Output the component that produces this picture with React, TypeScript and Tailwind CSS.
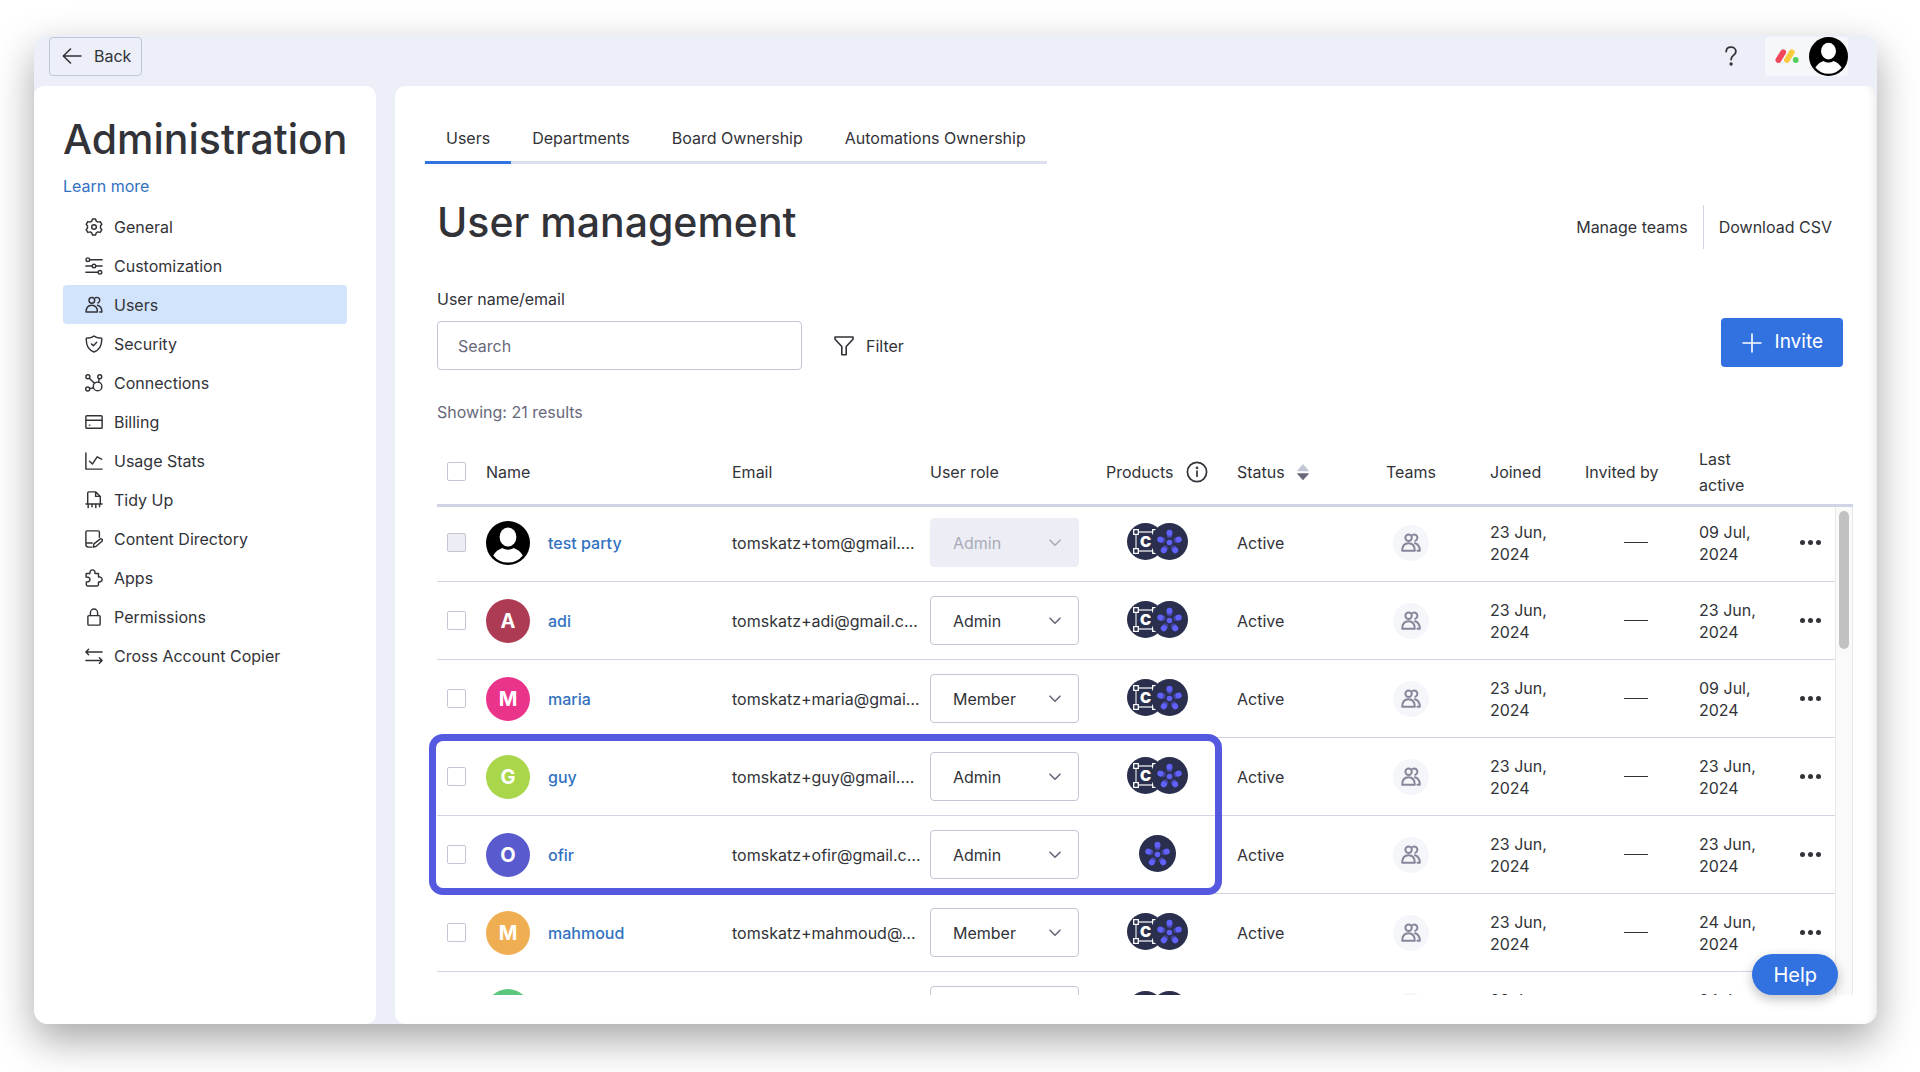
import type { ReactNode } from "react";

type User = {
  name: string;
  email: string;
  role: "Admin" | "Member";
  color?: string;
  copier: boolean;
  last: string;
  disabled?: boolean;
};

const users: User[] = [
  { name: "test party", email: "tomskatz+tom@gmail.…", role: "Admin", copier: true, last: "09 Jul,", disabled: true },
  { name: "adi", email: "tomskatz+adi@gmail.c…", role: "Admin", color: "bg-[#ae3b54]", copier: true, last: "23 Jun," },
  { name: "maria", email: "tomskatz+maria@gmai…", role: "Member", color: "bg-[#ea338b]", copier: true, last: "09 Jul," },
  { name: "guy", email: "tomskatz+guy@gmail.…", role: "Admin", color: "bg-[#a9d64b]", copier: true, last: "23 Jun," },
  { name: "ofir", email: "tomskatz+ofir@gmail.c…", role: "Admin", color: "bg-[#5a5acf]", copier: false, last: "23 Jun," },
  { name: "mahmoud", email: "tomskatz+mahmoud@…", role: "Member", color: "bg-[#f0ae53]", copier: true, last: "24 Jun," },
  { name: "noa", email: "tomskatz+noa@gmail.c…", role: "Member", color: "bg-[#5bc77c]", copier: true, last: "24 Jun," },
];

function Icon({ children, className = "size-5" }: { children: ReactNode; className?: string }) {
  return (
    <svg
      viewBox="0 0 20 20"
      className={`shrink-0 ${className}`}
      fill="none"
      stroke="currentColor"
      strokeWidth="1.6"
      strokeLinecap="round"
      strokeLinejoin="round"
      aria-hidden="true"
    >
      {children}
    </svg>
  );
}

const peoplePaths = (
  <>
    <circle cx="7.6" cy="4.8" r="3.2" />
    <path d="M1.2 17.8c0-5 2.6-7.6 6.3-7.6s6.3 2.6 6.3 7.6z" />
    <path d="M11.6 1.9c2.7-1.1 4.8.7 4.8 2.9 0 1.4-.9 2.5-2.1 3" />
    <path d="M13.9 10.3c3.2.9 4.9 3.5 4.9 7.5h-2.4" />
  </>
);

const nav: { label: string; icon: ReactNode }[] = [
  {
    label: "General",
    icon: (
      <>
        <circle cx="10" cy="10" r="2.6" />
        <path d="M8.3 1.1h3.4l.8 2.500 1.700 1 2.700-.600 1.800 3-1.500 1.900v2.200l1.500 1.900-1.800 3-2.700-.600-1.700 1-.8 2.500H8.300l-.8-2.500-1.700-1-2.700.600-1.800-3 1.500-1.900V8.900L1.300 7l1.800-3 2.700.600 1.700-1z" />
      </>
    ),
  },
  {
    label: "Customization",
    icon: (
      <>
        <circle cx="3.2" cy="3" r="2" />
        <path d="M5.200 3H19M1 10h7M12 10h7M1 17h13.500" />
        <circle cx="10" cy="10" r="2" />
        <circle cx="16.600" cy="17" r="2" />
      </>
    ),
  },
  { label: "Users", icon: peoplePaths },
  {
    label: "Security",
    icon: (
      <>
        <path d="M10 1.100c2 1.700 4.800 2.400 8.500 2.400.6 7.500-1.800 12.700-8.500 15.400C3.300 16.200.9 11 1.500 3.500 5.200 3.500 8 2.800 10 1.100z" />
        <path d="M7.200 10l2.100 2 3.700-3.900" />
      </>
    ),
  },
  {
    label: "Connections",
    icon: (
      <>
        <circle cx="3.200" cy="3" r="2.200" />
        <circle cx="16.400" cy="3" r="2.200" />
        <circle cx="3" cy="16.600" r="2.200" />
        <circle cx="14" cy="13.800" r="4.800" />
        <path d="M4.800 4.600l5.700 5.700M15.900 5.200L15 9M5.200 16.200l4.200-1" />
      </>
    ),
  },
  {
    label: "Billing",
    icon: (
      <>
        <rect x="1" y="3" width="18" height="14" rx="1" />
        <path d="M1 8h18M4.800 13.500h.6" />
      </>
    ),
  },
  {
    label: "Usage Stats",
    icon: <path d="M1 1v18h18M5 10.200l3.200 3.200 5.300-8L18.500 8" />,
  },
  {
    label: "Tidy Up",
    icon: (
      <>
        <path d="M3 14V2.200C3 1.500 3.500 1 4.200 1H12l5 5v8M11.800 1v5H17M1 14.500h18" />
        <path d="M3.500 15v3.500M7.800 15v2.500M12 15v3.500M16.200 15v2.500" />
      </>
    ),
  },
  {
    label: "Content Directory",
    icon: (
      <>
        <path d="M7.500 19H3.800A2.800 2.800 0 011 16.200V2.400C1 1.600 1.600 1 2.400 1h12.200c.8 0 1.400.6 1.400 1.400V8M1.200 14.500H8" />
        <path d="M9.200 18.800l.7-3.400 6.800-5.300c.8-.5 1.800-.3 2.300.4.500.7.300 1.700-.4 2.200L12 18.300z" />
      </>
    ),
  },
  {
    label: "Apps",
    icon: (
      <path d="M2 5h3.500C5.200 2.600 6.400 1 8.300 1s3.200 1.600 2.800 4H15v4c2.300-.4 4 .7 4 2.600s-1.700 3-4 2.700V17a1.800 1.800 0 01-1.800 1.800H2.800c-.8 0-1.300-.4-1.300-1.200v-3.300c2.600.2 4-.9 4-2.700S4 8.800 1.200 9V5.800c0-.5.3-.8.800-.8z" />
    ),
  },
  {
    label: "Permissions",
    icon: (
      <>
        <rect x="3.200" y="8.500" width="13.600" height="10.500" rx="1" />
        <path d="M6 8.300V5.200a4 4 0 018 0v3.100" />
      </>
    ),
  },
  {
    label: "Cross Account Copier",
    icon: <path d="M19 5.500H1.200M4 2.500l-3 3 3 3M1 15h17.800M16 12l3 3-3 3" />,
  },
];

function PersonAvatar({ className }: { className: string }) {
  return (
    <svg viewBox="0 0 44 44" className={`shrink-0 ${className}`} aria-hidden="true">
      <circle cx="22" cy="22" r="22" fill="#000" />
      <ellipse cx="22" cy="16" rx="8.400" ry="9.400" fill="#fff" />
      <path
        d="M7.200 34.400c2-3.400 5.500-6.200 9.300-7.400 3.300 2.300 7.700 2.300 11 0 3.800 1.200 7.300 4 9.300 7.400A19.400 19.400 0 0122 41.600 19.400 19.400 0 017.200 34.400z"
        fill="#fff"
      />
    </svg>
  );
}

function CopierBadge() {
  return (
    <span className="relative flex size-[37px] items-center justify-center rounded-full bg-[#292f4c]">
      <svg viewBox="0 0 37 37" className="absolute inset-0" fill="none" stroke="#fff" strokeWidth="1.300" aria-hidden="true">
        <path d="M9 11v15M11 9h15M11 28h15M28 11v15" strokeOpacity="0.800" />
        <path d="M6.700 6.700h4.600v4.600H6.700zM6.700 25.700h4.600v4.600H6.700zM25.700 6.700h4.600v4.600h-4.600zM25.700 25.700h4.600v4.600h-4.600z" />
      </svg>
      <span className="relative text-[15px] leading-4 font-black text-white">C</span>
    </span>
  );
}

const petals = [0, 72, 144, 216, 288];

function FlowerBadge() {
  return (
    <svg viewBox="0 0 37 37" className="relative size-[37px] shrink-0" aria-hidden="true">
      <circle cx="18.500" cy="18.500" r="18.500" fill="#292f4c" />
      {petals.map((angle) => (
        <g key={angle} transform={`rotate(${angle} 18.5 19.5)`}>
          <circle cx="18.500" cy="12.800" r="2.700" fill="#3d3f80" />
          <circle cx="18.500" cy="11.400" r="2.800" fill="#4b4bb4" />
          <circle cx="18.500" cy="9.800" r="3" fill="#6161ff" />
        </g>
      ))}
      <circle cx="18.500" cy="19.500" r="2.800" fill="#6161ff" />
    </svg>
  );
}

function Checkbox({ label, disabled = false }: { label: string; disabled?: boolean }) {
  return (
    <input
      type="checkbox"
      aria-label={label}
      disabled={disabled}
      className="ml-[10px] block size-[19px] appearance-none rounded-[2px] border border-[#c3c6d4] bg-white disabled:bg-[#ecedf5]"
    />
  );
}

function RoleSelect({ user }: { user: User }) {
  return (
    <div className={`relative w-[149px] ${user.disabled ? "text-[#a9abb8]" : "text-[#323338]"}`}>
      <select
        aria-label={`User role of ${user.name}`}
        defaultValue={user.role}
        disabled={user.disabled}
        className="block h-[49px] w-full appearance-none rounded border border-[#c3c6d4] bg-white pr-10 pl-[22px] text-base opacity-100 disabled:border-[#ecedf5] disabled:bg-[#ecedf5]"
      >
        <option>Admin</option>
        <option>Member</option>
      </select>
      <svg
        viewBox="0 0 12 8"
        className="pointer-events-none absolute top-[21px] right-[18px] h-2 w-3"
        fill="none"
        stroke={user.disabled ? "#a9abb8" : "#676879"}
        strokeWidth="1.600"
        strokeLinecap="round"
        strokeLinejoin="round"
        aria-hidden="true"
      >
        <path d="M1 1.200l5 5 5-5" />
      </svg>
    </div>
  );
}

const td = "border-b border-[#d0d4e4] p-0 align-middle";
const th = "h-[68px] border-b-[3px] border-[#d0d4e4] p-0 text-left align-middle font-normal";

function UserRow({ user, first }: { user: User; first: boolean }) {
  return (
    <tr className={first ? "h-[75px] [&>td]:pb-[3px]" : "h-[78px]"}>
      <td className={td}>
        <Checkbox label={`Select ${user.name}`} disabled={user.disabled} />
      </td>
      <td className={td}>
        <div className="flex items-center gap-[18px]">
          {user.color ? (
            <span className={`flex size-[44px] items-center justify-center rounded-full text-xl font-bold text-white ${user.color}`}>
              {user.name[0].toUpperCase()}
            </span>
          ) : (
            <PersonAvatar className="size-[44px]" />
          )}
          <a href="#user" className="font-medium text-[#3272c0]">
            {user.name}
          </a>
        </div>
      </td>
      <td className={`${td} whitespace-nowrap`}>{user.email}</td>
      <td className={td}>
        <RoleSelect user={user} />
      </td>
      <td className={td}>
        <div className="flex w-[103px] justify-center pb-[2px]">
          {user.copier && <CopierBadge />}
          <span className={user.copier ? "-ml-[13px]" : ""}>
            <FlowerBadge />
          </span>
        </div>
      </td>
      <td className={td}>Active</td>
      <td className={td}>
        <span className="ml-[7px] flex size-9 items-center justify-center rounded-full bg-[#f5f6fa] text-[#85869a]">
          <Icon className="size-5 stroke-2">{peoplePaths}</Icon>
        </span>
      </td>
      <td className={`${td} leading-[22px]`}>
        23 Jun,
        <br />
        2024
      </td>
      <td className={td}>
        <span className="ml-[39px] block h-px w-6 bg-[#323338]" />
      </td>
      <td className={`${td} leading-[22px]`}>
        {user.last}
        <br />
        2024
      </td>
      <td className={td}>
        <button type="button" aria-label={`Actions for ${user.name}`} className="ml-[11px] flex gap-[3px]">
          <span className="size-[5px] rounded-full bg-[#323338]" />
          <span className="size-[5px] rounded-full bg-[#323338]" />
          <span className="size-[5px] rounded-full bg-[#323338]" />
        </button>
      </td>
    </tr>
  );
}

function TopBar() {
  return (
    <header className="flex h-[51px] shrink-0 items-center justify-between pr-[29px] pb-[9px] pl-[15px]">
      <button type="button" className="flex h-[39px] items-center gap-3 rounded border border-[#c3c6d4] pr-[10px] pl-3">
        <Icon>
          <path d="M19 10H1.500M8.500 3L1.300 10l7.200 7" />
        </Icon>
        Back
      </button>
      <div className="flex items-center">
        <button type="button" aria-label="Help center" className="mr-7 block">
          <svg viewBox="0 0 12 20" className="h-5 w-3" fill="none" stroke="#323338" strokeWidth="1.800" strokeLinecap="round" aria-hidden="true">
            <path d="M1.200 5.500C1.300 2.800 3.300 1.200 6 1.200s4.900 1.700 4.900 4.300c0 3.800-4.800 3.600-4.800 8" />
            <circle cx="6.100" cy="18" r="0.800" fill="#323338" />
          </svg>
        </button>
        <button type="button" aria-label="Account menu" className="flex h-[39px] items-center rounded bg-[#f5f7fb] pl-[10px]">
          <svg viewBox="0 0 24 16" className="mr-[10px] h-4 w-6" fill="none" strokeWidth="5.800" strokeLinecap="round" aria-hidden="true">
            <path d="M3.400 12l4.800-7.800" stroke="#f0475a" />
            <path d="M12 12l4.800-7.800" stroke="#fccb40" />
            <circle cx="20.700" cy="12" r="2.900" fill="#55cf5c" />
          </svg>
          <PersonAvatar className="size-[39px]" />
        </button>
      </div>
    </header>
  );
}

function Sidebar() {
  return (
    <aside className="w-[342px] shrink-0 rounded-[10px] bg-white px-[29px] pt-[25px]">
      <h1 className="text-[41px] leading-[56px] font-medium whitespace-nowrap">Administration</h1>
      <a href="#learn" className="mt-[7px] block leading-6 text-[#3272c0]">
        Learn more
      </a>
      <nav className="mt-[9px]">
        {nav.map((item) => (
          <a
            key={item.label}
            href="#section"
            aria-current={item.label === "Users" ? "page" : undefined}
            className="flex h-[39px] items-center gap-[11px] rounded pl-[22px] aria-[current=page]:bg-[#d2e3fc]"
          >
            <Icon className="size-[18px]">{item.icon}</Icon>
            {item.label}
          </a>
        ))}
      </nav>
    </aside>
  );
}

const tabs = ["Users", "Departments", "Board Ownership", "Automations Ownership"];

function UserTable() {
  return (
    <div className="relative mt-[15px] min-h-0 flex-1">
      <div className="flex h-full overflow-hidden">
        <table className="w-full table-fixed border-separate border-spacing-0 self-start">
          <colgroup>
            <col className="w-[49px]" />
            <col />
            <col className="w-[198px]" />
            <col className="w-[176px]" />
            <col className="w-[131px]" />
            <col className="w-[149px]" />
            <col className="w-[104px]" />
            <col className="w-[95px]" />
            <col className="w-[114px]" />
            <col className="w-[90px]" />
            <col className="w-[46px]" />
          </colgroup>
          <thead>
            <tr>
              <th className={th}>
                <Checkbox label="Select all users" />
              </th>
              <th className={th}>Name</th>
              <th className={th}>Email</th>
              <th className={th}>User role</th>
              <th className={th}>
                <span className="flex items-center gap-3">
                  Products
                  <svg viewBox="0 0 22 22" className="size-[22px] shrink-0" fill="none" stroke="#323338" strokeWidth="1.700" strokeLinecap="round" aria-hidden="true">
                    <circle cx="11" cy="11" r="9.600" />
                    <path d="M11 10v5.200" />
                    <circle cx="11" cy="6.800" r="0.500" fill="#323338" />
                  </svg>
                </span>
              </th>
              <th className={th}>
                <span className="flex items-center gap-3">
                  Status
                  <svg viewBox="0 0 12 18" className="h-[18px] w-3 shrink-0" aria-hidden="true">
                    <path d="M6 1l5.700 6.500v.7H.3v-.7z" fill="#c3c6d4" />
                    <path d="M6 17.300L.3 11v-.8h11.400v.8z" fill="#676879" />
                  </svg>
                </span>
              </th>
              <th className={th}>Teams</th>
              <th className={th}>Joined</th>
              <th className={th}>Invited by</th>
              <th className={`${th} leading-[26px]`}>
                Last
                <br />
                active
              </th>
              <th className={th} aria-label="Actions" />
            </tr>
          </thead>
          <tbody>
            {users.map((user, i) => (
              <UserRow key={user.name} user={user} first={i === 0} />
            ))}
          </tbody>
        </table>
        <div className="flex w-[18px] shrink-0 flex-col">
          <div className="h-[68px] border-b-[3px] border-[#d0d4e4]" />
          <div className="flex-1 border-x border-[#e8e8e8] bg-[#fafafa] px-[3px] pt-1">
            <div className="h-[138px] w-[10px] rounded-full bg-[#c1c1c1]" />
          </div>
        </div>
      </div>
      <div className="pointer-events-none absolute top-[295px] -left-2 h-[161px] w-[793px] rounded-[14px] border-[7px] border-[#5559df]" />
    </div>
  );
}

export default function App() {
  return (
    <div className="flex h-screen flex-col bg-white pt-[35px] pr-[43px] pb-[48px] pl-[34px] font-['Inter',sans-serif] text-base text-[#323338]">
      <div className="relative flex min-h-0 flex-1 flex-col overflow-hidden rounded-[14px] bg-[#eceff8] shadow-[0_16px_40px_rgba(0,0,0,0.35)]">
        <TopBar />
        <div className="flex min-h-0 flex-1 gap-[19px]">
          <Sidebar />
          <main className="flex min-w-0 flex-1 flex-col rounded-[10px] bg-white pt-10 pr-[24px] pb-[29px] pl-[42px] shadow-[inset_-8px_0_8px_-6px_rgba(0,0,0,0.1)]">
            <div role="tablist" className="-ml-3 flex self-start">
              {tabs.map((tab, i) => (
                <button
                  key={tab}
                  type="button"
                  role="tab"
                  aria-selected={i === 0}
                  className="border-b-[3px] border-[#dcdfec] px-[21px] pb-[11px] leading-6 aria-selected:border-[#3171e0]"
                >
                  {tab}
                </button>
              ))}
            </div>
            <div className="mt-[30px] flex items-end justify-between pr-[21px]">
              <h2 className="text-[41px] leading-[56px] font-medium">User management</h2>
              <div className="mb-px flex h-11 items-center">
                <a href="#teams" className="pr-[15px]">
                  Manage teams
                </a>
                <a href="#csv" className="flex h-full items-center border-l border-[#d0d4e4] pl-[15px]">
                  Download CSV
                </a>
              </div>
            </div>
            <div className="mt-[37px] flex items-end justify-between pr-[10px]">
              <div>
                <label htmlFor="search" className="block leading-6">
                  User name/email
                </label>
                <div className="mt-[10px] flex items-center">
                  <input
                    id="search"
                    type="text"
                    placeholder="Search"
                    className="h-[49px] w-[365px] rounded border border-[#c3c6d4] pl-5 placeholder:text-[#676879]"
                  />
                  <button type="button" className="ml-8 flex items-center gap-3">
                    <Icon>
                      <path d="M1 1h18v2.200L12.200 10.500V18.800H7.800V10.500L1 3.200z" />
                    </Icon>
                    Filter
                  </button>
                </div>
              </div>
              <button type="button" className="mb-[3px] flex h-[49px] items-center gap-[13px] rounded bg-[#3171e0] pr-5 pl-[21px] text-[19px] text-white">
                <Icon>
                  <path d="M10 1v18M1 10h18" />
                </Icon>
                Invite
              </button>
            </div>
            <p className="mt-[30px] leading-6 text-[#676879]">Showing: 21 results</p>
            <UserTable />
          </main>
        </div>
        <button
          type="button"
          className="absolute right-[39px] bottom-[29px] h-[41px] rounded-full bg-[#3171e0] px-[21px] text-[20px] text-white shadow-[0_4px_12px_rgba(0,0,0,0.25)]"
        >
          Help
        </button>
      </div>
    </div>
  );
}
